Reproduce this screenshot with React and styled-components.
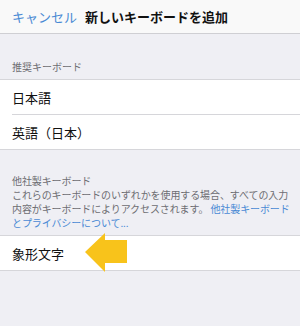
import styled, { createGlobalStyle } from "styled-components";

const GlobalStyle = createGlobalStyle`
  html, body {
    margin: 0;
    padding: 0;
    background: #efeff4;
  }
  body {
    font-family: "Noto Sans CJK JP", "Noto Sans", sans-serif;
    -webkit-font-smoothing: antialiased;
  }
`;

const Page = styled.div`
  position: relative;
  width: 300px;
  height: 326px;
  background: #efeff4;
  overflow: hidden;
`;

const NavBar = styled.header`
  display: flex;
  align-items: center;
  gap: 8px;
  height: 33px;
  padding: 0 12px;
  background: #f9f9f9;
  border-bottom: 1px solid #cfcfd3;
`;

const Cancel = styled.span`
  font-size: 13px;
  color: #4a8ad4;
`;

const Title = styled.h1`
  margin: 0;
  font-size: 13px;
  font-weight: 700;
  color: #111;
`;

const SectionLabel = styled.div`
  padding: ${(p) => p.$top}px 12px 5px;
  font-size: 10px;
  line-height: 14px;
  color: #6d6d72;
`;

const Group = styled.ul`
  list-style: none;
  margin: 0;
  padding: 0 0 0 12px;
  background: #fff;
  border-top: 1px solid #d6d6da;
  border-bottom: 1px solid #d6d6da;
`;

const Row = styled.li`
  display: flex;
  align-items: center;
  height: 34px;
  font-size: 13px;
  color: #111;
  & + & {
    border-top: 1px solid #d6d6da;
  }
`;

const NoteLine = styled.span`
  display: block;
  white-space: nowrap;
  letter-spacing: -0.1px;
`;

const Link = styled.span`
  color: #4a8ad4;
`;

const Arrow = styled.svg`
  position: absolute;
  left: 84px;
  top: 231px;
`;

export default function App() {
  return (
    <Page>
      <GlobalStyle />
      <NavBar>
        <Cancel>キャンセル</Cancel>
        <Title>新しいキーボードを追加</Title>
      </NavBar>

      <SectionLabel $top={26}>推奨キーボード</SectionLabel>
      <Group>
        <Row>日本語</Row>
        <Row>英語（日本）</Row>
      </Group>

      <SectionLabel $top={24}>
        <NoteLine>他社製キーボード</NoteLine>
        <NoteLine>これらのキーボードのいずれかを使用する場合、すべての入力</NoteLine>
        <NoteLine>
          内容がキーボードによりアクセスされます。 <Link>他社製キーボード</Link>
        </NoteLine>
        <NoteLine>
          <Link>とプライバシーについて...</Link>
        </NoteLine>
      </SectionLabel>
      <Group>
        <Row>象形文字</Row>
      </Group>

      <Arrow width="44" height="42" viewBox="0 0 44 42">
        <polygon
          points="1,21 21,2 21,9 43,9 43,32 21,32 21,41"
          fill="#f8c31b"
        />
      </Arrow>
    </Page>
  );
}
